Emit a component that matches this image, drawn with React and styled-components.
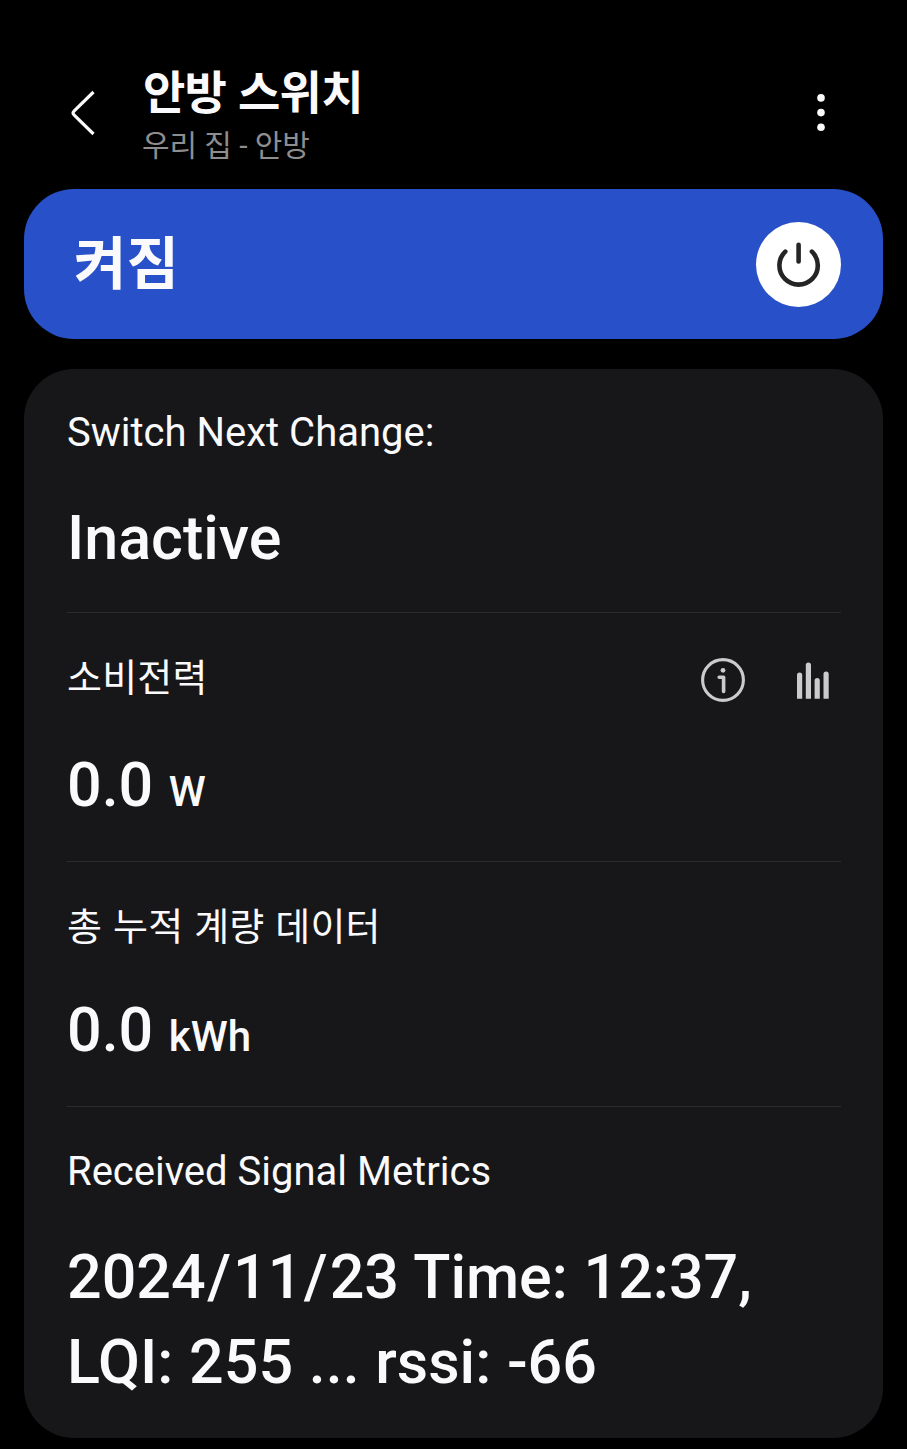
import React, { useState } from "react";
import styled, { createGlobalStyle } from "styled-components";

const GlobalStyle = createGlobalStyle`
  * {
    box-sizing: border-box;
  }

  body {
    margin: 0;
    background: #000;
    color: #fafafc;
    font-family: Roboto, "Noto Sans CJK KR", sans-serif;
  }

  button {
    margin: 0;
    padding: 0;
    border: none;
    background: none;
    color: inherit;
    font: inherit;
    cursor: pointer;
  }
`;

// --- Styled Components ---

const Screen = styled.main`
  display: flex;
  flex-direction: column;
  min-height: 1449px;
  padding: 64px 24px 11px;
  background: #000;
`;

const Header = styled.header`
  display: flex;
  align-items: flex-start;
  height: 125px;
  padding: 0 44px 0 41px;
`;

const HeaderButton = styled.button`
  display: flex;
  align-items: center;
  justify-content: center;
  width: 36px;
  height: 50px;
  margin-top: 24px;
`;

const HeaderText = styled.div`
  flex: 1;
  padding: 1px 0 0 41px;

  h1 {
    margin: 0;
    padding-left: 1px;
    font-size: 46px;
    font-weight: 700;
    line-height: 56px;
    letter-spacing: -0.7px;
    word-spacing: 1px;
  }

  p {
    margin: 0;
    color: #8e8e90;
    font-size: 30px;
    line-height: 50px;
    letter-spacing: -0.1px;
  }
`;

const PowerCard = styled.section`
  display: flex;
  align-items: center;
  justify-content: space-between;
  height: 150px;
  padding: 0 42px 0 50px;
  border-radius: 50px;
  background: ${({ $on }) => ($on ? "#2850c8" : "#17171a")};
`;

const PowerState = styled.span`
  padding-top: 1px;
  font-size: 57px;
  font-weight: 700;
  line-height: 72px;
`;

const PowerButton = styled.button`
  display: flex;
  align-items: center;
  justify-content: center;
  width: 85px;
  height: 85px;
  border-radius: 50%;
  background: #fff;
  color: #252525;
`;

const Card = styled.section`
  margin-top: 30px;
  height: 1069px;
  padding: 0 42px 0 43px;
  border-radius: 50px;
  background: #17171a;
`;

const Row = styled.div`
  padding: ${({ $top }) => $top}px 0 ${({ $bottom }) => $bottom}px;

  & + & {
    border-top: 1px solid #2c2c2f;
  }
`;

const RowHeader = styled.div`
  display: flex;
  align-items: center;
  justify-content: space-between;
  height: 48px;
  margin-bottom: ${({ $gap }) => $gap}px;
`;

const Label = styled.span`
  font-size: ${({ $korean }) => ($korean ? 38 : 40)}px;
  line-height: 48px;
  letter-spacing: ${({ $korean }) => ($korean ? "0.2px" : "normal")};
  word-spacing: ${({ $korean }) => ($korean ? "1.2px" : "normal")};
`;

const Actions = styled.div`
  display: flex;
  align-items: center;
  gap: 52px;
  padding: 3px 12px 0 0;
  color: #cbcbcd;
`;

const Value = styled.div`
  font-size: 61px;
  font-weight: 500;
  line-height: 85px;
  word-spacing: 0.5px;
`;

const Slash = styled.span`
  padding: 0 2px 0 1.5px;
`;

const Unit = styled.span`
  margin-left: 15.5px;
  font-size: 42px;
  line-height: 1;
`;

// --- Icons ---

const BackIcon = () => (
  <svg width="26" height="46" viewBox="0 0 26 46" fill="none" stroke="currentColor" strokeWidth="3.2">
    <path d="M23.5 2 4 21.2Q2 23 4 24.8L23.5 44" />
  </svg>
);

const MoreIcon = () => (
  <svg width="10" height="40" viewBox="0 0 10 40" fill="currentColor">
    <circle cx="5" cy="4.9" r="3.8" />
    <circle cx="5" cy="19.6" r="3.8" />
    <circle cx="5" cy="34.3" r="3.8" />
  </svg>
);

const PowerIcon = () => (
  <svg width="46" height="48" viewBox="0 0 46 48" fill="none" stroke="currentColor" strokeWidth="4.6" strokeLinecap="round">
    <path d="M22.6 4.7V21.5" />
    <path d="M9.3 11.6A19.2 19.2 0 1 0 35.9 11.6" />
  </svg>
);

const InfoIcon = () => (
  <svg width="44" height="44" viewBox="0 0 44 44" fill="none" stroke="currentColor">
    <circle cx="22" cy="22" r="20.4" strokeWidth="3.1" />
    <circle cx="22" cy="12.3" r="2.4" fill="currentColor" stroke="none" />
    <path d="M18.2 19.3H22.6V33.5" strokeWidth="3.6" strokeLinecap="round" strokeLinejoin="round" />
  </svg>
);

const ChartIcon = () => (
  <svg width="32" height="39" viewBox="0 0 32 39" fill="currentColor">
    <path d="M0 38.7V15.2a2.6 2.6 0 0 1 5.2 0V38.7z" />
    <path d="M8.8 38.7V5a2.6 2.6 0 0 1 5.2 0V38.7z" />
    <path d="M17.6 38.7V20.7a2.6 2.6 0 0 1 5.2 0V38.7z" />
    <path d="M26.5 38.7V14a2.6 2.6 0 0 1 5.2 0V38.7z" />
  </svg>
);

// --- Data ---
const METRICS = [
  { id: "next", label: "Switch Next Change:", lines: ["Inactive"], top: 40, gap: 39, bottom: 31 },
  { id: "power", label: "소비전력", korean: true, lines: ["0.0"], unit: "W", actions: true, top: 41, gap: 41, bottom: 33 },
  { id: "energy", label: "총 누적 계량 데이터", korean: true, lines: ["0.0"], unit: "kWh", top: 41, gap: 37, bottom: 33 },
  {
    id: "signal",
    label: "Received Signal Metrics",
    lines: ["2024/11/23 Time: 12:37,", "LQI: 255 ... rssi: -66"],
    top: 41,
    gap: 39,
    bottom: 33,
  },
];

// Gives the slashes in a date a little more room
const spaceSlashes = (text) =>
  text.split(/(\/)/).map((part, idx) => (part === "/" ? <Slash key={idx}>/</Slash> : part));

function App() {
  const [on, setOn] = useState(true);

  return (
    <>
      <GlobalStyle />
      <Screen>
        <Header>
          <HeaderButton aria-label="뒤로">
            <BackIcon />
          </HeaderButton>
          <HeaderText>
            <h1>안방 스위치</h1>
            <p>우리 집 - 안방</p>
          </HeaderText>
          <HeaderButton aria-label="더보기">
            <MoreIcon />
          </HeaderButton>
        </Header>

        <PowerCard $on={on}>
          <PowerState>{on ? "켜짐" : "꺼짐"}</PowerState>
          <PowerButton aria-label="전원" onClick={() => setOn(!on)}>
            <PowerIcon />
          </PowerButton>
        </PowerCard>

        <Card>
          {METRICS.map((item) => (
            <Row key={item.id} $top={item.top} $bottom={item.bottom}>
              <RowHeader $gap={item.gap}>
                <Label $korean={item.korean}>{item.label}</Label>
                {item.actions && (
                  <Actions>
                    <InfoIcon />
                    <ChartIcon />
                  </Actions>
                )}
              </RowHeader>
              {item.lines.map((line) => (
                <Value key={line}>
                  {spaceSlashes(line)}
                  {item.unit && <Unit>{item.unit}</Unit>}
                </Value>
              ))}
            </Row>
          ))}
        </Card>
      </Screen>
    </>
  );
}

export default App;
